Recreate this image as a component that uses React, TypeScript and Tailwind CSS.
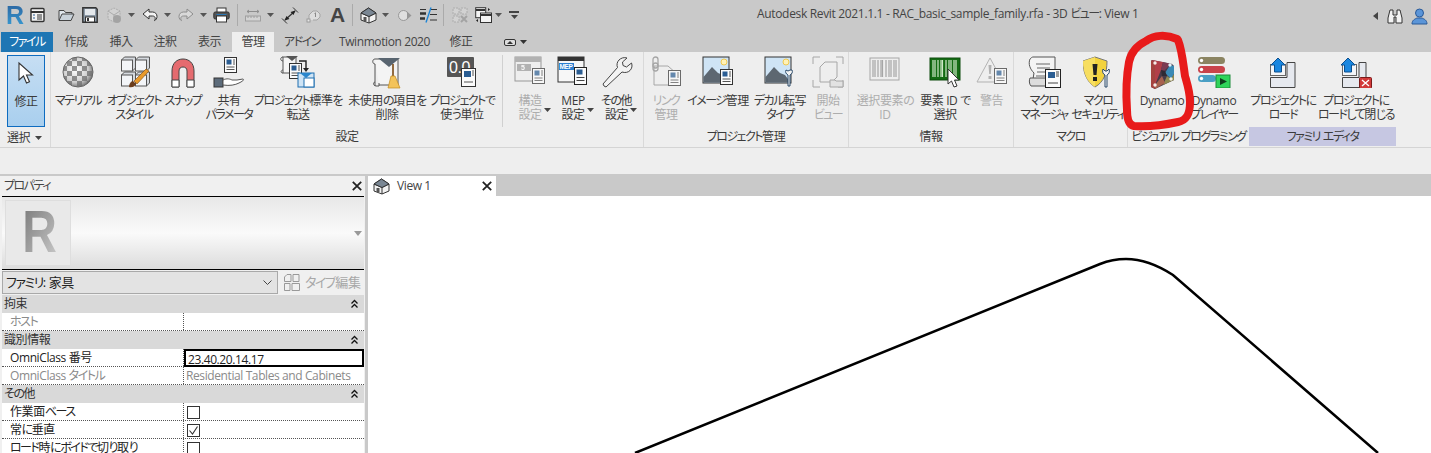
import React from "react";

type P = { children: React.ReactNode; w?: number; h?: number; vb?: string; className?: string };
const Svg = ({ children, w = 32, h = 32, vb, className }: P) => (
  <svg width={w} height={h} viewBox={vb ?? `0 0 ${w} ${h}`} className={"shrink-0 " + (className ?? "")}>
    {children}
  </svg>
);

/* kana runs are set tighter, as the proportional kana of the reference's UI font */
const J = ({ t }: { t: string }) => (
  <>
    {t.split(/([\u3040-\u30ff]+)/).map((s, i) =>
      i % 2 ? (
        <span key={i} className="tracking-[-1.5px]">
          {s}
        </span>
      ) : (
        <span key={i}>{s}</span>
      )
    )}
  </>
);

const Sheet = ({ x, y }: { x: number; y: number }) => (
  <g transform={`translate(${x} ${y})`}>
    <rect x="0.5" y="0.5" width="12" height="15" fill="#fbfbfb" stroke="#333" />
    <rect x="2.5" y="2.5" width="5" height="5" fill="#2b5d92" />
    <path d="M9 3h2M9 5h2M9 7h2M2.5 10h8M2.5 12.5h8" stroke="#555" fill="none" />
  </g>
);

const Caret = ({ c = "#555" }: { c?: string }) => (
  <Svg w={7} h={4}>
    <path d="M0 0h7L3.5 4z" fill={c} />
  </Svg>
);

/* ---------- quick access icons ---------- */
const QSheet = () => (
  <Svg w={16} h={16}>
    <rect x="1" y="1.5" width="13" height="13" rx="1" fill="#f4f4f4" stroke="#333" strokeWidth="1.4" />
    <path d="M1 5h13" stroke="#333" strokeWidth="2" />
    <path d="M3 7.5h2v1H3zM3 10.5h2v1H3z" fill="#2b5d92" />
    <path d="M7 8h5M7 10h5M7 12h5" stroke="#333" />
  </Svg>
);
const QOpen = () => (
  <Svg w={17} h={14}>
    <path d="M1 12V2.5h5l1.5 2H14v2" fill="#dfe6ec" stroke="#444" />
    <path d="M1 12.5l3-6.5h12l-3 6.5z" fill="#c9d2da" stroke="#444" />
  </Svg>
);
const QSave = () => (
  <Svg w={16} h={16}>
    <path d="M.8.8h13l1.4 1.4v13H.8z" fill="#8d9aa7" stroke="#333" strokeWidth="1.4" />
    <rect x="3" y="2" width="10" height="6" fill="#e4e8ec" />
    <rect x="3.5" y="10" width="9" height="5" fill="#fff" stroke="#333" />
    <rect x="5" y="11" width="2" height="3" fill="#333" />
  </Svg>
);
const QSync = () => (
  <Svg w={16} h={17} className="opacity-45">
    <path d="M2 4l6-3 6 3v8l-6 3-6-3z" fill="#ddd" stroke="#888" strokeDasharray="2 1" />
    <path d="M8 8v7M2 4l6 4 6-4" stroke="#888" fill="none" />
    <circle cx="11" cy="12" r="4" fill="#777" />
  </Svg>
);
const QUndo = ({ off }: { off?: boolean }) => (
  <Svg w={16} h={14} className={off ? "opacity-40 -scale-x-100" : ""}>
    <path d="M7 1L1 6l6 5V8h3.5c1.8 0 2.7 1 2.7 2.4 0 .9-.3 1.6-.7 2.2C14 12 15 10.3 15 8.5 15 6 13.3 4 10.5 4H7z" fill="#f3f3f3" stroke="#333" strokeLinejoin="round" />
  </Svg>
);
const QPrint = () => (
  <Svg w={17} h={16}>
    <rect x="4" y="1" width="9" height="5" fill="#fff" stroke="#333" />
    <rect x=".8" y="5" width="15.4" height="7" rx="1.5" fill="#555" stroke="#333" />
    <rect x="3.5" y="9" width="10" height="6" fill="#fff" stroke="#333" />
    <rect x="3.5" y="7" width="10" height="1" fill="#2b7ab8" />
  </Svg>
);
const QMeasure = () => (
  <Svg w={16} h={14} className="opacity-50">
    <path d="M2 3.5h12M2 3.5l2-1.5M2 3.5l2 1.5M14 3.5l-2-1.5M14 3.5l-2 1.5" stroke="#555" fill="none" />
    <rect x=".5" y="8" width="15" height="5" fill="#ddd" stroke="#777" />
    <path d="M3 8v2M6 8v2M9 8v2M12 8v2" stroke="#777" />
  </Svg>
);
const QAlign = () => (
  <Svg w={18} h={17}>
    <path d="M4 13L14 4" stroke="#333" strokeWidth="1.3" />
    <path d="M14.5 3.5L9.5 5l3 3zM3.5 13.5L8.5 12l-3-3z" fill="#222" />
    <path d="M1 11.5l5 5M12 .5l5 5" stroke="#333" />
  </Svg>
);
const QTag = () => (
  <Svg w={15} h={15} className="opacity-55">
    <path d="M3 12V7l4-4h4l3 3v3l-3 3H7" fill="#eee" stroke="#888" />
    <rect x="1" y="11" width="3" height="3" fill="#fff" stroke="#777" />
    <path d="M8.5 5.5l1-.7V9" stroke="#555" fill="none" />
  </Svg>
);
const QHouse = () => (
  <Svg w={17} h={17}>
    <path d="M1 6l7.5-5L16 6v7l-7 3-8-3z" fill="#f2f2f2" stroke="#333" />
    <path d="M1 6l8 3.5L16 6M9 9.5V16" stroke="#333" fill="none" />
    <path d="M1 6l7.5-5L16 6 9 9.5z" fill="#7a8794" stroke="#333" />
    <rect x="3.5" y="10" width="3" height="4" fill="#555" />
  </Svg>
);
const QHide = () => (
  <Svg w={15} h={15} className="opacity-60">
    <circle cx="6.5" cy="7.5" r="5" fill="#eee" stroke="#777" />
    <path d="M10 3.5l4.5 4-4.5 4z" fill="#777" />
  </Svg>
);
const QThin = () => (
  <Svg w={17} h={16}>
    <path d="M0 2.5h6M10 2.5h7M10 7.5h7M10 13h7" stroke="#333" strokeWidth="1.2" />
    <path d="M0 6.5h6M0 11.5h5" stroke="#333" strokeWidth="2.4" />
    <path d="M6 15.5L11 .5" stroke="#1f86d6" strokeWidth="1.4" />
  </Svg>
);
const QGrid = () => (
  <Svg w={16} h={16} className="opacity-45">
    <path d="M1 1h6v6H1zM9 1h6v6H9zM1 9h6v6H1z" fill="#ddd" stroke="#888" strokeDasharray="2 1" />
    <path d="M9 9l6 6M15 9l-6 6" stroke="#777" strokeWidth="2" />
  </Svg>
);
const QSwitch = () => (
  <Svg w={17} h={16}>
    <rect x=".7" y=".7" width="10" height="10" fill="#f3f3f3" stroke="#333" />
    <path d="M1 3h9" stroke="#333" strokeWidth="2" />
    <rect x="5.5" y="6" width="11" height="9.5" fill="#f3f3f3" stroke="#333" />
    <path d="M6 8h10" stroke="#333" strokeWidth="2" />
    <path d="M13 1l2 1.5L13 4zM3 12l-2 1.5L3 15z" fill="#222" />
  </Svg>
);

/* ---------- ribbon icons ---------- */
const IcCursor = () => (
  <Svg w={20} h={32}>
    <path d="M3 6v17l4.5-4 3 7 3-1.3-3-6.7h6z" fill="#fff" stroke="#333" strokeWidth="1.1" />
  </Svg>
);
const IcMaterial = () => (
  <Svg>
    <defs>
      <radialGradient id="ball" cx="0.42" cy="0.42" r="0.6">
        <stop offset="0" stopColor="#fff" />
        <stop offset="0.7" stopColor="#cfcfcf" />
        <stop offset="1" stopColor="#777" />
      </radialGradient>
      <pattern id="chk" width="10" height="10" patternUnits="userSpaceOnUse">
        <rect width="5" height="5" fill="#6f6f6f" />
        <rect x="5" y="5" width="5" height="5" fill="#6f6f6f" />
      </pattern>
      <clipPath id="ballc"><circle cx="16" cy="16" r="15" /></clipPath>
    </defs>
    <circle cx="16" cy="16" r="15" fill="url(#ball)" />
    <g clipPath="url(#ballc)"><rect width="32" height="32" fill="url(#chk)" opacity="0.75" /></g>
    <circle cx="16" cy="16" r="15" fill="none" stroke="#666" />
  </Svg>
);
const Cube = ({ x, y, s = 12 }: { x: number; y: number; s?: number }) => (
  <g transform={`translate(${x} ${y})`}>
    <path d={`M.5 3l3-3h${s - 3}v${s - 3}l-3 3z`} fill="#d5d9de" stroke="#555" />
    <rect x="0.5" y="3" width={s - 3} height={s - 3} fill="#f3f5f8" stroke="#555" />
  </g>
);
const IcObject = () => (
  <Svg>
    <Cube x={3} y={1} s={14} />
    <Cube x={17} y={1} s={14} />
    <Cube x={3} y={16} s={14} />
    <Cube x={17} y={16} s={14} />
    <path d="M11 31c3 1 6-.5 7-3l-3-3c-2 0-4 3-4 6z" fill="#6b3d1c" />
    <path d="M16 25l12-12 3 2-12 13z" fill="#e89a2c" stroke="#7a4a14" strokeWidth=".6" />
  </Svg>
);
const IcMagnet = () => (
  <Svg>
    <path d="M5 31V15C5 7 10 3 16 3s11 4 11 12v16h-7V15c0-3-2-4-4-4s-4 1-4 4v16z" fill="#e56b6f" stroke="#444" />
    <path d="M5 24h7v7H5zM20 24h7v7h-7z" fill="#fff" stroke="#444" />
  </Svg>
);
const IcShare = () => (
  <Svg>
    <Sheet x={11} y={1} />
    <rect x="1" y="22" width="9" height="9" fill="#5c6b7a" stroke="#333" />
    <path d="M10 24c4-2 7-1 9 0h5l6-1c2 1-2 3-4 4-4 2-9 3-16 2z" fill="#fff" stroke="#555" />
  </Svg>
);
const Scroll = ({ x = 0, y = 0 }: { x?: number; y?: number }) => (
  <g transform={`translate(${x} ${y})`}>
    <rect x="3" y="1" width="13" height="16" fill="#f4f4f4" stroke="#555" />
    <path d="M3 1c-3 0-3 4 0 4M3 14c-2 0-3 3 0 3" fill="none" stroke="#555" />
  </g>
);
const IcTransfer = () => (
  <Svg w={36}>
    <Scroll x={0} y={0} />
    <path d="M6 0h12l-6 5z" fill="#555" />
    <Sheet x={9} y={7} />
    <path d="M19 5h7v8" stroke="#222" fill="none" strokeWidth="1.4" />
    <path d="M23 12h6l-3 4z" fill="#222" />
    <g>
      <rect x="18" y="17" width="16" height="14" fill="#cfe4f5" stroke="#1f6fb0" />
      <path d="M20 17h12l-6 5z" fill="#2a86cc" />
      <rect x="24" y="22" width="10" height="9" fill="#fff" stroke="#1f6fb0" />
    </g>
  </Svg>
);
const IcPurge = () => (
  <Svg w={30} h={34}>
    <path d="M3 3h23v26H7" fill="#f4f4f4" stroke="#555" />
    <path d="M3 3c-3 0-3 5 0 5v22M3 26c-2 0-2 4 1 4h3v-3" fill="#eee" stroke="#555" />
    <path d="M6 2h22l-11 9z" fill="#596570" />
    <path d="M21 8v13" stroke="#7a4a14" strokeWidth="1.6" />
    <path d="M19 20h4l5 12H16z" fill="#f3c35a" stroke="#c08a20" strokeWidth=".7" />
  </Svg>
);
const IcUnits = () => (
  <Svg w={30} h={34}>
    <rect x="0" y="1" width="27" height="20" rx="1" fill="#555" />
    <text x="2" y="17" fill="#fff" fontSize="16" fontFamily="Liberation Sans">0.0</text>
    <g transform="translate(14 12)">
      <rect x=".5" y=".5" width="14" height="18" fill="#fbfbfb" stroke="#333" />
      <rect x="3" y="3" width="7" height="6" fill="#2b5d92" />
      <path d="M11 3h2M11 5h2M11 7h2M3 14h9" stroke="#555" />
    </g>
  </Svg>
);
const IcStruct = () => (
  <Svg>
    <rect x="1" y="1" width="26" height="24" fill="#eee" stroke="#777" />
    <rect x="1" y="1" width="26" height="5" fill="#999" />
    <rect x="3" y="8" width="14" height="7" fill="#999" />
    <text x="7" y="14" fill="#fff" fontSize="7" fontFamily="Liberation Sans" fontWeight="700">5</text>
    <Sheet x={18} y={12} />
  </Svg>
);
const IcMep = () => (
  <Svg>
    <rect x="1" y="1" width="26" height="25" fill="#f7f7f7" stroke="#333" />
    <rect x="1" y="1" width="26" height="4" fill="#333" />
    <rect x="2" y="7" width="15" height="7" fill="#2a7fd0" />
    <text x="2.5" y="13.3" fill="#fff" fontSize="6.5" fontFamily="Liberation Sans" fontWeight="700">MEP</text>
    <g transform="translate(17 11)">
      <rect x=".5" y=".5" width="12" height="17" fill="#fbfbfb" stroke="#222" />
      <rect x="2.5" y="2.5" width="6" height="5" fill="#2b5d92" />
      <path d="M2.5 10.5h8M2.5 13.5h8" stroke="#444" />
    </g>
  </Svg>
);
const IcWrench = () => (
  <Svg>
    <path d="M2 28l1 2 2 1 16-15c3 1 6 .5 8-1.5s2.5-5 1.5-7.5l-5 4-3.5-1.5-.5-3.5 4.5-4c-3-1-6 0-8 2s-2.5 5-1.5 7.500z" fill="#f3f3f3" stroke="#444" />
  </Svg>
);
const IcLink = () => (
  <Svg>
    <path d="M4 10h14l9 8v11H4z" fill="#eee" stroke="#888" />
    <rect x="3" y="1" width="5" height="11" rx="2.5" fill="none" stroke="#888" strokeWidth="1.3" />
    <rect x="3" y="7" width="5" height="8" rx="2.5" fill="none" stroke="#888" strokeWidth="1.3" />
    <Sheet x={18} y={14} />
  </Svg>
);
const Scene = () => (
  <>
    <rect x="1" y="1" width="26" height="26" fill="#cfe4f5" stroke="#333" />
    <circle cx="22" cy="6" r="3" fill="#fff2b8" stroke="#f0c850" />
    <path d="M1.5 26.5V21L10 11l6 6 5 2 5.5 7.5z" fill="#5d6771" />
  </>
);
const IcImage = () => (
  <Svg>
    <Scene />
    <Sheet x={18} y={13} />
  </Svg>
);
const IcDecal = () => (
  <Svg>
    <Scene />
    <path d="M24 30V19c-2-1-3-3-2-5l2 1 2-1 2 0c1 2 0 4-2 5v11z" fill="#f3f3f3" stroke="#2b4b6b" />
  </Svg>
);
const IcStart = () => (
  <Svg>
    <path d="M1 8V1h7M24 1h7v7M31 24v7h-5M1 24v7h7" fill="none" stroke="#888" />
    <path d="M8 11l5-5h12v15l-5 5H8z" fill="#eee" stroke="#888" />
    <path d="M18 24h5l1 1h7v6H18z" fill="#ddd" stroke="#888" />
  </Svg>
);
const Barcode = ({ c }: { c: string }) => (
  <path
    d="M4 4v17M6 4v17M9 4v17M12 4v17M13.5 4v17M17 4v17M20 4v17M22 4v17M25 4v17M27 4v17"
    stroke={c}
    strokeWidth="1.2"
    fill="none"
  />
);
const IcBarcode = () => (
  <Svg>
    <rect x="1" y="2" width="29" height="22" fill="#eee" stroke="#888" />
    <Barcode c="#888" />
  </Svg>
);
const IcSelectId = () => (
  <Svg>
    <rect x="1" y="2" width="30" height="22" fill="#136b13" stroke="#0e4d0e" />
    <Barcode c="#cfe8c8" />
    <path d="M19 13v15l3.5-3 2.5 6 3-1-2.5-6h4.5z" fill="#fff" stroke="#333" />
  </Svg>
);
const IcWarn = () => (
  <Svg>
    <path d="M14 2L1 26h26z" fill="#eee" stroke="#999" strokeLinejoin="round" />
    <path d="M12.5 9h3l-.7 9h-1.6z M12.5 20h3v3h-3z" fill="#999" />
    <Sheet x={18} y={12} />
  </Svg>
);
const IcMacroMgr = () => (
  <Svg w={34}>
    <path d="M6 1h22v18l-1 10H5l2-12c-4-4-6-9-4-14 1-1 2-2 3-2z" fill="#f4f4f4" stroke="#555" />
    <path d="M3 22h24c-1 4-2 7-4 8H4c-2-2-2-6-1-8z" fill="#ddd" stroke="#555" />
    <path d="M9 8h14M10 12h13M10 16h12M9 20h13" stroke="#666" />
    <g transform="translate(18 13)">
      <rect x=".5" y=".5" width="15" height="18" fill="#fbfbfb" stroke="#222" />
      <rect x="3" y="3" width="7" height="6" fill="#2b5d92" />
      <path d="M11 3h3M11 5h3M11 7h3M3 14h10" stroke="#444" />
    </g>
  </Svg>
);
const IcShield = () => (
  <Svg w={30}>
    <path d="M12 1l12 4c0 12-3 21-12 26C4 26 0 17 0 5z" fill="#f3d33e" stroke="#777" />
    <path d="M12 1v30C4 26 0 17 0 5z" fill="#f7de60" />
    <path d="M9.5 8h5l-1 11h-3z M10 21h4v4h-4z" fill="#222" />
    <path d="M22 31V19c-2-1-3-3-2-6l2 2 2 0 2-2c1 3 0 5-2 6v12z" fill="#f3f3f3" stroke="#2b4b6b" />
  </Svg>
);
const IcDynamo = () => (
  <Svg w={26} h={34}>
    <path d="M3 4L23 8 25 10 25 24 6 33 2 31 2 5z" fill="#463a48" />
    <path d="M3 4L6 7 6 29 6 33 2 31 2 5z" fill="#a5433f" />
    <path d="M3 4L14 6 12 14 6 29 6 7z" fill="#b23f48" />
    <path d="M14 6L23 8 21 9 15 15 12 14z" fill="#7c3b52" />
    <path d="M21 9L25 10 25 18 22 23 16 17z" fill="#3b8ab5" />
    <path d="M22 23L25 18 25 24 14 29 18 20z" fill="#8f8a52" />
    <path d="M6 29L13 20 16 27 6 33z" fill="#a8624f" />
    <path d="M12 14l4 1 2 5-5 0z" fill="#2f2a33" />
    <circle cx="6" cy="7" r="1.7" fill="#f4ece8" />
    <circle cx="21" cy="9" r="1.7" fill="#e3f2f8" />
    <circle cx="22" cy="23" r="1.7" fill="#f1efe2" />
    <circle cx="6" cy="29" r="1.7" fill="#f4ece8" />
  </Svg>
);
const IcPlayer = () => (
  <Svg w={33}>
    <rect x="0" y="1" width="27" height="7" rx="3.5" fill="#8b8462" />
    <rect x="0" y="10" width="27" height="7" rx="3.5" fill="#c9434a" />
    <rect x="0" y="19" width="18" height="7" rx="3.5" fill="#4a9fc4" />
    <circle cx="3.5" cy="13.5" r="1.7" fill="#fff" />
    <circle cx="3.5" cy="22.5" r="1.7" fill="#fff" />
    <circle cx="3.5" cy="4.5" r="1.7" fill="#fff" />
    <rect x="18" y="19" width="14" height="13" fill="#2fd35a" stroke="#1c8c3a" />
    <path d="M22 22l7 3.5-7 3.5z" fill="#0f3d1e" />
  </Svg>
);
const IcLoad = () => (
  <Svg w={34}>
    <path d="M4.500 21.500h16.500v-15h8v25h-24.500z" fill="#e6e9ef" stroke="#444" />
    <rect x="4.500" y="8.500" width="15" height="11" fill="#f4f6f9" stroke="#666" />
    <path d="M12 2l7 7h-3.500v7h-7V9H5z" fill="#1a87e0" stroke="#0b4f8f" />
  </Svg>
);
const IcLoadClose = () => (
  <Svg w={34}>
    <path d="M3.500 21.500h16.500v-15h7v25h-23.500z" fill="#e6e9ef" stroke="#444" />
    <rect x="3.500" y="8.500" width="14" height="11" fill="#f4f6f9" stroke="#666" />
    <path d="M9 2l7 7h-3.500v7h-7V9H2z" fill="#1a87e0" stroke="#0b4f8f" />
    <rect x="20.500" y="21.500" width="12" height="11" rx="1" fill="#d23a3a" stroke="#7a1a1a" />
    <path d="M23 24l7 6M30 24l-7 6" stroke="#fff" strokeWidth="1.3" />
  </Svg>
);

/* ---------- ribbon ---------- */
const Item = ({
  w,
  icon,
  l1,
  l2,
  off,
  caret,
}: {
  w: number;
  icon: React.ReactNode;
  l1: string;
  l2?: string;
  off?: boolean;
  caret?: boolean;
}) => (
  <div style={{ width: w }} className={"flex shrink-0 flex-col items-center " + (off ? "text-[#adadad]" : "text-[#3b3b3b]")}>
    <div className={"flex h-[42px] items-start justify-center pt-[4px] " + (off ? "opacity-70" : "")}>{icon}</div>
    <div className="h-[14px] whitespace-nowrap leading-[14px]"><J t={l1} /></div>
    <div className="relative h-[14px] whitespace-nowrap leading-[14px]">
      {l2 && <J t={l2} />}
      {caret && (
        <span className="absolute right-[-9px] top-[0px]">
          <Caret c="#444" />
        </span>
      )}
    </div>
  </div>
);

const Group = ({
  w,
  label,
  children,
  tint,
  noBorder,
}: {
  w: number;
  label: string;
  children: React.ReactNode;
  tint?: boolean;
  noBorder?: boolean;
}) => (
  <div style={{ width: w }} className={"flex h-[95px] shrink-0 flex-col " + (noBorder ? "" : "border-r border-[#d9d9d9]")}>
    <div className="flex h-[75px]">{children}</div>
    <div className={"flex h-[19px] items-center justify-center whitespace-pre text-[#3b3b3b] " + (tint ? "bg-[#c6c7e2]" : "")}><J t={label} /></div>
  </div>
);

const Tab = ({ w, t, active }: { w: number; t: string; active?: boolean }) => (
  <div
    style={{ width: w }}
    className={"flex h-[20px] shrink-0 items-center justify-center whitespace-nowrap text-[#444] " + (active ? "bg-[#eeeeee]" : "")}
  >
    <span><J t={t} /></span>
  </div>
);

const Drop = () => (
  <span className="flex w-[7px] justify-center">
    <Caret c="#555" />
  </span>
);

const Chev = () => (
  <svg width="9" height="10" viewBox="0 0 9 10" className="mr-[4px]">
    <path d="M1.5 4.5L4.5 1.5l3 3M1.5 8.5l3-3 3 3" fill="none" stroke="#111" strokeWidth="1.3" />
  </svg>
);

const Section = ({ t }: { t: string }) => (
  <div className="flex h-[18px] items-center justify-between bg-[#d9d9d9] pl-[2px] pr-[1px] text-[#333]">
    <span><J t={t} /></span>
    <Chev />
  </div>
);

const Row = ({ a, b, dim, box, checked, focus }: { a: string; b?: string; dim?: boolean; box?: boolean; checked?: boolean; focus?: boolean }) => (
  <div className="flex h-[18px] border-b border-dotted border-[#555] bg-white">
    <div className={"w-[182px] shrink-0 whitespace-nowrap border-r border-dotted border-[#555] pl-[8px] leading-[17px] " + (dim ? "text-[#8a8a8a]" : "text-[#222]")}><J t={a} /></div>
    <div className={"relative flex-1 whitespace-nowrap pl-[2px] leading-[17px] " + (dim ? "text-[#8a8a8a]" : "text-[#222]") + (focus ? " border-2 border-black pl-[1px] leading-[14px] -mb-[1px]" : "")}>
      {b}
      {box && (
        <span className="absolute left-[3px] top-[3px] flex h-[13px] w-[13px] items-center justify-center border border-[#333] bg-white">
          {checked && (
            <svg width="11" height="11" viewBox="0 0 11 11">
              <path d="M1.5 5.5l3 3.5 5-7.5" fill="none" stroke="#333" strokeWidth="1.1" />
            </svg>
          )}
        </span>
      )}
    </div>
  </div>
);

export default function App() {
  return (
    <div className="relative h-[453px] w-[1431px] overflow-hidden bg-[#eeeeee] font-['Open_Sans','Noto_Sans_CJK_JP',sans-serif] text-[12px] tracking-[-0.4px] [font-feature-settings:'palt']">
      {/* title bar + quick access */}
      <div className="flex h-[32px] items-center bg-[#c9c9c9] text-[#444]">
        <div className="flex items-center pb-[2px]">
          <span className="ml-[6px] w-[18px] bg-gradient-to-b from-[#2a5f9a] to-[#3aa0d8] bg-clip-text font-['Liberation_Sans'] text-[25px] font-bold leading-[28px] text-transparent">R</span>
          <span className="ml-[6px]"><QSheet /></span>
          <span className="ml-[12px]"><QOpen /></span>
          <span className="ml-[7px]"><QSave /></span>
          <span className="ml-[8px]"><QSync /></span>
          <span className="ml-[6px]"><Drop /></span>
          <span className="ml-[7px]"><QUndo /></span>
          <span className="ml-[6px]"><Drop /></span>
          <span className="ml-[7px]"><QUndo off /></span>
          <span className="ml-[6px]"><Drop /></span>
          <span className="ml-[6px]"><QPrint /></span>
          <span className="ml-[7px] h-[22px] w-px bg-[#aaaaaa]" />
          <span className="ml-[7px]"><QMeasure /></span>
          <span className="ml-[6px]"><Drop /></span>
          <span className="ml-[7px]"><QAlign /></span>
          <span className="ml-[7px]"><QTag /></span>
          <span className="ml-[9px] w-[17px] font-['Liberation_Sans'] text-[21px] font-bold leading-[24px] text-[#444]">A</span>
          <span className="ml-[5px] h-[22px] w-px bg-[#aaaaaa]" />
          <span className="ml-[7px]"><QHouse /></span>
          <span className="ml-[5px]"><Drop /></span>
          <span className="ml-[8px]"><QHide /></span>
          <span className="ml-[8px]"><QThin /></span>
          <span className="ml-[6px] h-[22px] w-px bg-[#aaaaaa]" />
          <span className="ml-[8px]"><QGrid /></span>
          <span className="ml-[7px]"><QSwitch /></span>
          <span className="ml-[3px]"><Drop /></span>
          <span className="ml-[7px] flex w-[10px] flex-col items-center gap-[2px]">
            <span className="h-[2px] w-[10px] bg-[#444]" />
            <Caret c="#444" />
          </span>
        </div>
        <div className="ml-[238px] whitespace-nowrap pb-[5px] text-[12px] tracking-[-0.33px] text-[#444]">
          <J t="Autodesk Revit 2021.1.1 - RAC_basic_sample_family.rfa - 3D ビュー: View 1" />
        </div>
        <div className="ml-auto flex items-center gap-[8px] pr-[3px]">
          <svg width="6" height="8" viewBox="0 0 6 8"><path d="M5 0v8L0 4z" fill="#444" /></svg>
          <svg width="16" height="16" viewBox="0 0 16 16">
            <path d="M3 2h3v5h4V2h3l2 8v5H9V9H7v6H1v-5z" fill="#f3f3f3" stroke="#333" />
          </svg>
          <svg width="17" height="17" viewBox="0 0 17 17">
            <circle cx="8.5" cy="5" r="4" fill="#5b95d8" stroke="#2a5a98" />
            <path d="M1 16c0-4 3-5 5-6h5c2 1 5 2 5 6z" fill="#5b95d8" stroke="#2a5a98" />
          </svg>
        </div>
      </div>

      {/* tabs */}
      <div className="flex h-[20px] items-center bg-[#c9c9c9] pl-[1px]">
        <div className="flex h-[20px] w-[52px] shrink-0 items-center justify-center bg-[#1e76b4] text-white"><span><J t="ファイル" /></span></div>
        <Tab w={46} t="作成" />
        <Tab w={44} t="挿入" />
        <Tab w={44} t="注釈" />
        <Tab w={45} t="表示" />
        <Tab w={42} t="管理" active />
        <Tab w={56} t="アドイン" />
        <Tab w={109} t="Twinmotion 2020" />
        <Tab w={44} t="修正" />
        <div className="ml-[21px] flex items-center gap-[4px]">
          <span className="flex h-[7px] w-[12px] items-center justify-center rounded-[2px] border border-[#333] bg-[#ddd]">
            <span className="border-x-[3px] border-b-[3px] border-x-transparent border-b-[#333]" />
          </span>
          <Caret c="#333" />
        </div>
      </div>

      {/* ribbon */}
      <div className="flex h-[96px] border-b border-[#d4d4d4] bg-[#eeeeee]">
        <div className="flex h-[95px] w-[51px] shrink-0 flex-col border-r border-[#d9d9d9] pl-[7px]">
          <div className="mt-[3px] flex h-[72px] w-[38px] flex-col items-center border border-[#0e6cc0] bg-gradient-to-b from-[#c6def3] to-[#a9cfee] text-[#3b3b3b]">
            <div className="h-[39px] pt-[1px]"><IcCursor /></div>
            <div className="leading-[14px]">修正</div>
          </div>
          <div className="mt-[1px] flex h-[19px] items-center gap-[5px] text-[#3b3b3b]">
            <span>選択</span>
            <Caret c="#444" />
          </div>
        </div>

        <Group w={593} label="設定">
          <Item w={54} icon={<IcMaterial />} l1="マテリアル" />
          <Item w={58} icon={<IcObject />} l1="オブジェクト" l2="スタイル" />
          <Item w={40} icon={<IcMagnet />} l1="スナップ" />
          <Item w={52} icon={<IcShare />} l1="共有" l2="パラメータ" />
          <Item w={86} icon={<IcTransfer />} l1="プロジェクト標準を" l2="転送" />
          <Item w={92} icon={<IcPurge />} l1="未使用の項目を" l2="削除" />
          <Item w={58} icon={<IcUnits />} l1="プロジェクトで" l2="使う単位" />
          <div className="ml-[11px] mt-[3px] h-[72px] w-px shrink-0 bg-[#d0d0d0]" />
          <Item w={54} icon={<IcStruct />} l1="構造" l2="設定" off caret />
          <Item w={32} icon={<IcMep />} l1="MEP" l2="設定" caret />
          <Item w={55} icon={<IcWrench />} l1="その他" l2="設定" caret />
        </Group>
        <Group w={205} label="プロジェクト管理">
          <Item w={44} icon={<IcLink />} l1="リンク" l2="管理" off />
          <Item w={60} icon={<IcImage />} l1="イメージ管理" />
          <Item w={64} icon={<IcDecal />} l1="デカル転写" l2="タイプ" />
          <Item w={32} icon={<IcStart />} l1="開始" l2="ビュー" off />
        </Group>
        <Group w={165} label="情報">
          <Item w={72} icon={<IcBarcode />} l1="選択要素の" l2="ID" off />
          <Item w={48} icon={<IcSelectId />} l1="要素 ID で" l2="選択" />
          <Item w={45} icon={<IcWarn />} l1="警告" off />
        </Group>
        <Group w={114} label="マクロ">
          <Item w={60} icon={<IcMacroMgr />} l1="マクロ" l2="マネージャ" />
          <Item w={48} icon={<IcShield />} l1="マクロ" l2="セキュリティ" />
        </Group>
        <Group w={121} label="ビジュアル プログラミング" noBorder>
          <Item w={68} icon={<IcDynamo />} l1="Dynamo" />
          <Item w={36} icon={<IcPlayer />} l1="Dynamo" l2="プレイヤー" />
        </Group>
        <Group w={147} label="ファミリ エディタ" tint noBorder>
          <Item w={68} icon={<IcLoad />} l1="プロジェクトに" l2="ロード" />
          <Item w={78} icon={<IcLoadClose />} l1="プロジェクトに" l2="ロードして閉じる" />
        </Group>
      </div>

      {/* options bar */}
      <div className="h-[26px] bg-[#eeeeee]" />
      <div className="h-[2px] bg-[#c9c9c9]" />

      {/* lower area */}
      <div className="flex h-[277px]">
        <div className="w-[365px] shrink-0 bg-[#f0f0f0] pl-[2px] pr-[1px]">
          <div className="flex h-[20px] items-center justify-between pl-[2px] pr-[2px] text-[#444]">
            <span><J t="プロパティ" /></span>
            <svg width="10" height="10" viewBox="0 0 10 10"><path d="M.8.8l8.4 8.4M9.2.8L.8 9.2" stroke="#222" strokeWidth="1.8" /></svg>
          </div>
          <div className="flex h-[74px] items-center justify-between border-y border-black bg-gradient-to-b from-[#e8e8e8] via-[#fafafa] to-[#dcdcdc] pl-[3px] pr-[2px]">
            <div className="flex h-[66px] w-[66px] items-center justify-center border border-[#dedede] bg-[#e9e9e9]">
              <span className="ml-[3px] mt-[-2px] scale-x-[0.8] bg-gradient-to-br from-[#777777] to-[#cccccc] bg-clip-text font-['Liberation_Sans'] text-[60px] font-bold leading-[60px] text-transparent">R</span>
            </div>
            <svg width="8" height="5" viewBox="0 0 8 5"><path d="M0 0h8L4 5z" fill="#999" /></svg>
          </div>
          <div className="flex h-[25px] items-center">
            <div className="flex h-[23px] w-[276px] shrink-0 items-center justify-between border border-[#a9a9a9] bg-[#e3e3e3] pl-[3px] pr-[5px] text-[13px] text-[#222]">
              <span><J t="ファミリ: 家具" /></span>
              <svg width="9" height="6" viewBox="0 0 9 6"><path d="M.5.5l4 4 4-4" fill="none" stroke="#444" /></svg>
            </div>
            <div className="ml-[6px] flex items-center gap-[5px] whitespace-nowrap text-[13px] text-[#a8a8a8]">
              <svg width="16" height="17" viewBox="0 0 16 17" className="shrink-0">
                <path d="M3 .5h4v7H.5V3zM9 .5h6v7H9zM.5 9.5H6v7H.5zM8 9.5h7.5v7H8z" fill="none" stroke="#999" />
              </svg>
              <span><J t="タイプ編集" /></span>
            </div>
          </div>
          <Section t="拘束" />
          <Row a="ホスト" dim />
          <Section t="識別情報" />
          <Row a="OmniClass 番号" b="23.40.20.14.17" focus />
          <Row a="OmniClass タイトル" b="Residential Tables and Cabinets" dim />
          <Section t="その他" />
          <Row a="作業面ベース" box />
          <Row a="常に垂直" box checked />
          <Row a="ロード時にボイドで切り取り" box />
        </div>
        <div className="w-[3px] shrink-0 bg-[#c9c9c9]" />
        <div className="flex min-w-0 flex-1 flex-col">
          <div className="flex h-[20px] bg-[#c9c9c9]">
            <div className="flex w-[128px] items-center justify-between bg-white pl-[5px] pr-[4px] text-[#444]">
              <span className="flex items-center gap-[7px] font-medium">
                <QHouse />
                <span>View 1</span>
              </span>
              <svg width="10" height="10" viewBox="0 0 10 10"><path d="M.8.8l8.4 8.4M9.2.8L.8 9.2" stroke="#222" strokeWidth="1.8" /></svg>
            </div>
          </div>
          <svg className="block h-[257px] w-[1063px] bg-white" viewBox="368 196 1063 257">
            <path d="M635 453L1100 264C1110 260 1118 259 1126 259C1142 259 1156 264 1173 275L1378 453" fill="none" stroke="#000" strokeWidth="2.5" />
          </svg>
        </div>
      </div>

      {/* hand-drawn red circle */}
      <svg className="absolute left-0 top-0 z-10 pointer-events-none" width="1431" height="453" viewBox="0 0 1431 453">
        <path
          d="M1177 39C1166 34 1154 35 1146 41C1138 45 1131 52 1129 62C1126 78 1126 95 1127 110C1127 118 1129 125 1134 126C1148 127 1164 125 1178 122C1188 120 1190 112 1190 102C1190 92 1187 83 1185 76C1183 62 1182 50 1178 40"
          fill="none"
          stroke="#e81a1a"
          strokeWidth="8"
          strokeLinecap="round"
        />
      </svg>
    </div>
  );
}
